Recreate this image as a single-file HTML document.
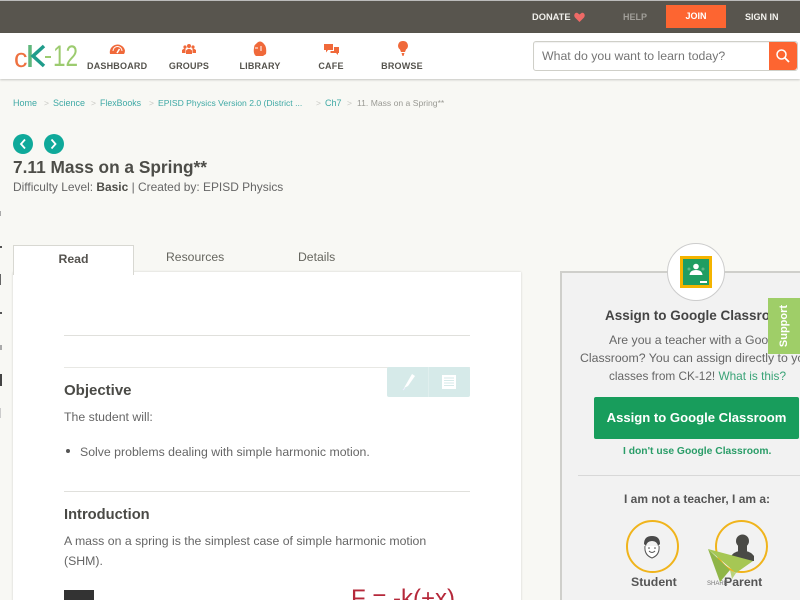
<!DOCTYPE html>
<html style="overflow:hidden;height:600px"><head><meta charset="utf-8"><style>
html,body{margin:0;padding:0}
body{width:800px;height:600px;overflow:hidden;position:relative;font-family:"Liberation Sans",sans-serif;color:#5a5a5a}
#w{position:absolute;left:0;top:0;width:800px;height:600px;overflow:hidden;background:#f8f8f4}
.a{position:absolute;white-space:nowrap}
.nav{font-size:9px;font-weight:bold;color:#55534d;text-align:center;top:61px;letter-spacing:.2px}
.bc{font-size:9px;top:98px;color:#3fa9a5}
.sep{font-size:8.500px;top:98px;color:#c9c9c4}
.ctr{text-align:center}
svg{position:absolute;overflow:visible}
</style></head><body><div id="w">
<div class="a" style="left:0;top:0;width:800px;height:33px;background:#58554e;border-top:1px solid #bbb;box-sizing:border-box"></div>
<div class="a" style="left:0;top:33px;width:800px;height:46px;background:#fff;box-shadow:0 1px 2px rgba(0,0,0,.2)"></div>
<div class="a" style="left:532px;top:12px;font-size:9.300px;font-weight:bold;color:#f0efeb">DONATE</div>
<svg style="left:574px;top:12px" width="11" height="10" viewBox="0 0 11 10"><path d="M5.500 10L1 5.500C-1 3 1.500 0 3.500 1L5.500 2.500L7.500 1C9.500 0 12 3 10 5.500Z" fill="#ee6a66"/></svg>
<div class="a" style="left:623px;top:12px;font-size:9px;font-weight:bold;color:#a09e98">HELP</div>
<div class="a ctr" style="left:666px;top:5px;width:60px;height:23px;background:#fd6531;color:#fff;font-size:9px;font-weight:bold;line-height:23px">JOIN</div>
<div class="a" style="left:745px;top:12px;font-size:9px;font-weight:bold;color:#f4f3ef">SIGN IN</div>

<div class="a" style="left:14px;top:42px;font-size:27px;line-height:32px;color:#ee7140">c</div>
<svg style="left:28px;top:45px" width="18" height="23" viewBox="0 0 18 23"><path d="M2 0V22" stroke="#5fb77c" stroke-width="3.500"/><path d="M16 1L5 11L16 21" stroke="#1f9c8b" stroke-width="3.500" fill="none"/></svg>
<div class="a" style="left:45px;top:56px;width:6px;height:2px;background:#9ccb6f"></div>
<div class="a" style="left:53px;top:41px;font-size:30px;line-height:32px;color:#9ccb6f;transform:scaleX(.75);transform-origin:0 0">12</div>

<svg style="left:110px;top:43px" width="15" height="11" viewBox="0 0 15 11"><path d="M0 11A7.500 7.500 0 0 1 15 7.500Q15 9.500 14 11Z" fill="#f0693a"/><path d="M3 8A4.500 4.500 0 0 1 12 8" stroke="#fff" fill="none"/><path d="M7 10L9.500 6" stroke="#fff" stroke-width="1.500"/></svg>
<svg style="left:182px;top:44px" width="14" height="10" viewBox="0 0 14 10"><circle cx="7" cy="2" r="2" fill="#f0693a"/><circle cx="3" cy="3" r="1.600" fill="#f0693a"/><circle cx="11" cy="3" r="1.600" fill="#f0693a"/><path d="M4 10V6.500Q7 3 10 6.500V10Z" fill="#f0693a"/><path d="M0 9V6Q3 3.500 3.500 5V9ZM14 9V6Q11 3.500 10.500 5V9Z" fill="#f0693a"/></svg>
<svg style="left:253px;top:41px" width="14" height="15" viewBox="0 0 14 15"><path d="M3 3Q7-2 11 3Q14 6 13 13L10 15H3Q0 13 1 7Q1 4 3 3Z" fill="#f0693a"/><path d="M5 7H2M8 5V10" stroke="#fff"/></svg>
<svg style="left:324px;top:44px" width="15" height="12" viewBox="0 0 15 12"><path d="M0 0H9V6H4L2 8.500V6H0Z" fill="#f0693a"/><path d="M10 3H15V9H14V11L12 9H6.500V7H10Z" fill="#f0693a"/></svg>
<svg style="left:398px;top:41px" width="10" height="15" viewBox="0 0 10 15"><path d="M5 0A4.700 4.700 0 0 1 8 8.500L7 11H3L2 8.500A4.700 4.700 0 0 1 5 0Z" fill="#f0693a"/><path d="M3.500 12H6.500L5.500 15H4.500Z" fill="#f0693a"/></svg>
<div class="a nav" style="left:87px;width:60px">DASHBOARD</div>
<div class="a nav" style="left:159px;width:60px">GROUPS</div>
<div class="a nav" style="left:230px;width:60px">LIBRARY</div>
<div class="a nav" style="left:301px;width:60px">CAFE</div>
<div class="a nav" style="left:372px;width:60px">BROWSE</div>

<div class="a" style="left:533px;top:41px;width:265px;height:30px;background:#fff;border:1px solid #cfcfc8;border-radius:3px;box-sizing:border-box;box-shadow:inset 0 1px 1px rgba(0,0,0,.06)"></div>
<div class="a" style="left:542px;top:49px;font-size:12.300px;color:#757575">What do you want to learn today?</div>
<div class="a" style="left:769px;top:42px;width:28px;height:28px;background:#fd6531;border-radius:0 3px 3px 0"></div>
<svg style="left:776px;top:49px" width="14" height="14" viewBox="0 0 14 14"><circle cx="5.500" cy="5.500" r="4.500" fill="none" stroke="#fff" stroke-width="1.500"/><path d="M9 9L13 13" stroke="#fff" stroke-width="1.800"/></svg>

<div class="a bc" style="left:13px">Home</div><div class="a sep" style="left:44px">&gt;</div>
<div class="a bc" style="left:53px">Science</div><div class="a sep" style="left:91px">&gt;</div>
<div class="a bc" style="left:100px;font-size:8.800px">FlexBooks</div><div class="a sep" style="left:149px">&gt;</div>
<div class="a bc" style="left:158px;font-size:8.600px">EPISD Physics Version 2.0 (District ...</div><div class="a sep" style="left:316px">&gt;</div>
<div class="a bc" style="left:325px">Ch7</div><div class="a sep" style="left:347px">&gt;</div>
<div class="a bc" style="left:357px;color:#9a9a94;font-size:8.600px">11. Mass on a Spring**</div>

<div class="a" style="left:13px;top:134px;width:20px;height:20px;border-radius:50%;background:#0fa99a"></div>
<div class="a" style="left:44px;top:134px;width:20px;height:20px;border-radius:50%;background:#0fa99a"></div>
<svg style="left:13px;top:134px" width="51" height="20" viewBox="0 0 51 20"><path d="M12 5.500L8 10L12 14.500M38.500 5.500L42.500 10L38.500 14.500" stroke="#fff" stroke-width="1.800" fill="none"/></svg>
<div class="a" style="left:13px;top:157px;font-size:17.300px;font-weight:bold;color:#4d4d48">7.11 Mass on a Spring**</div>
<div class="a" style="left:13px;top:180px;font-size:11.950px;color:#666">Difficulty Level: <b style="color:#4d4d48">Basic</b> | Created by: EPISD Physics</div>

<div class="a" style="left:13px;top:272px;width:508px;height:340px;background:#fff;box-shadow:0 0 2px rgba(0,0,0,.18)"></div>
<div class="a ctr" style="left:13px;top:245px;width:119px;height:29px;background:#fff;border:1px solid #d8d8d2;border-bottom:none;line-height:27px;font-size:12.300px;font-weight:bold;color:#55534f">Read</div>
<div class="a" style="left:166px;top:250px;font-size:12.200px;color:#66665f">Resources</div>
<div class="a" style="left:298px;top:250px;font-size:12.200px;color:#66665f">Details</div>

<div class="a" style="left:64px;top:335px;width:406px;height:1px;background:#e0e0dc"></div>
<div class="a" style="left:64px;top:367px;width:406px;height:1px;background:#e8e8e4"></div>
<div class="a" style="left:387px;top:367px;width:83px;height:30px;background:#d6eae9;border-radius:2px"></div>
<div class="a" style="left:428px;top:367px;width:1px;height:30px;background:#e0efee"></div>
<svg style="left:402px;top:373px" width="14" height="18" viewBox="0 0 14 18"><path d="M10 1L13 3L6 13L2 15Z" fill="#fff"/><path d="M1 17L3 15" stroke="#eef"/></svg>
<svg style="left:442px;top:375px" width="14" height="14" viewBox="0 0 14 14"><rect width="14" height="14" fill="#fff"/><path d="M2 3H12M2 5.500H12M2 8H12M2 10.500H12" stroke="#d6eae9"/></svg>
<div class="a" style="left:64px;top:382px;font-size:15px;font-weight:bold;color:#4a4a46">Objective</div>
<div class="a" style="left:64px;top:410px;font-size:12.300px;color:#666">The student will:</div>
<div class="a" style="left:66px;top:449px;width:4px;height:4px;border-radius:50%;background:#555"></div>
<div class="a" style="left:80px;top:445px;font-size:12.300px;color:#666">Solve problems dealing with simple harmonic motion.</div>
<div class="a" style="left:64px;top:491px;width:406px;height:1px;background:#e0e0dc"></div>
<div class="a" style="left:64px;top:507px;font-size:14.700px;font-weight:bold;color:#4a4a46">Introduction</div>
<div class="a" style="left:64px;top:534px;font-size:12.300px;color:#666">A mass on a spring is the simplest case of simple harmonic motion</div>
<div class="a" style="left:64px;top:554px;font-size:12.300px;color:#666">(SHM).</div>
<div class="a" style="left:64px;top:590px;width:30px;height:10px;background:#333"></div>
<div class="a" style="left:351px;top:585px;font-size:24px;color:#b5283a">F = -k(+x)</div>

<div class="a" style="left:560px;top:271px;width:260px;height:340px;background:#f2f2f2;border:2px solid #cfcfcb;box-sizing:border-box"></div>
<div class="a" style="left:667px;top:243px;width:58px;height:58px;border-radius:50%;background:#fff;border:1.500px solid #ccc;box-sizing:border-box"></div>
<div class="a" style="left:680px;top:256px;width:32px;height:32px;background:#1f9d62;border:3px solid #f4b400;box-sizing:border-box"></div>
<svg style="left:683px;top:259px" width="26" height="26" viewBox="0 0 26 26"><circle cx="13" cy="7.500" r="2.800" fill="#fff"/><path d="M6.500 16Q7 11 13 11Q19 11 19.500 16Z" fill="#fff"/><rect x="17" y="22" width="7" height="2" fill="#fff"/><circle cx="6" cy="10" r="1.500" fill="#5fb88a"/><circle cx="20" cy="10" r="1.500" fill="#5fb88a"/></svg>
<div class="a" style="left:605px;top:308px;font-size:13.500px;font-weight:bold;color:#444">Assign to Google Classroom</div>
<div class="a" style="left:609px;top:333px;font-size:12.300px;color:#666">Are you a teacher with a Google</div>
<div class="a" style="left:580px;top:351px;font-size:12.300px;color:#666">Classroom? You can assign directly to your</div>
<div class="a" style="left:609px;top:369px;font-size:11.800px;color:#666">classes from CK-12! <span style="color:#3aa377">What is this?</span></div>
<div class="a ctr" style="left:594px;top:397px;width:205px;height:42px;background:#189d5c;border-radius:2px;color:#fff;font-size:13.100px;font-weight:bold;line-height:41px">Assign to Google Classroom</div>
<div class="a" style="left:623px;top:446px;font-size:10.300px;font-weight:bold;color:#2a9d68">I don't use Google Classroom.</div>
<div class="a" style="left:578px;top:475px;width:222px;height:1px;background:#d8d8d8"></div>
<div class="a" style="left:624px;top:492px;font-size:12px;font-weight:bold;color:#555">I am not a teacher, I am a:</div>
<div class="a" style="left:626px;top:520px;width:53px;height:53px;border-radius:50%;border:2.500px solid #f0b41c;box-sizing:border-box"></div>
<div class="a" style="left:715px;top:520px;width:53px;height:53px;border-radius:50%;border:2.500px solid #f0b41c;box-sizing:border-box"></div>
<svg style="left:640px;top:535px" width="24" height="24" viewBox="0 0 24 24"><path d="M5 11Q4 20 12 23Q20 20 19 11" fill="#fff" stroke="#555"/><path d="M4 9Q4 1 12 1Q20 1 20 9L18 11Q17 6 12 6Q7 6 6 11Z" fill="#4a4a4a"/><path d="M9 16Q12 19 15 16" stroke="#555" fill="none"/><circle cx="9" cy="13" r=".8" fill="#444"/><circle cx="15" cy="13" r=".8" fill="#444"/></svg>
<svg style="left:731px;top:533px" width="23" height="28" viewBox="0 0 23 28"><circle cx="11.500" cy="8" r="6.500" fill="#4a4a46"/><rect x="7" y="10" width="9" height="9" fill="#4a4a46"/><path d="M0 28V23Q3 19 8 18H15Q20 19 23 23V28Z" fill="#4a4a46"/></svg>
<div class="a" style="left:631px;top:575px;font-size:12.300px;font-weight:bold;color:#555">Student</div>
<div class="a" style="left:724px;top:575px;font-size:12.300px;font-weight:bold;color:#555">Parent</div>
<div class="a" style="left:707px;top:581px;font-size:6px;color:#777">SHARE</div>
<svg style="left:708px;top:549px" width="46" height="36" viewBox="0 0 46 36"><path d="M0 0L45 12L28 24Z" fill="#a6c754"/><path d="M0 0L12 33L22 21Z" fill="#8fb548"/><path d="M22 21L28 24L24 30Z" fill="#b9d37a"/></svg>

<div class="a" style="left:768px;top:298px;width:32px;height:56px;background:#9fce68"></div>
<div class="a ctr" style="left:756px;top:319px;width:56px;height:14px;line-height:14px;font-size:11px;font-weight:bold;color:#fff;transform:rotate(-90deg)">Support</div>

<div class="a" style="left:0;top:211px;width:1px;height:5px;background:#aaa"></div>
<div class="a" style="left:0;top:246px;width:2px;height:2px;background:#555"></div>
<div class="a" style="left:0;top:274px;width:1px;height:11px;background:#666"></div>
<div class="a" style="left:0;top:312px;width:2px;height:2px;background:#555"></div>
<div class="a" style="left:0;top:345px;width:2px;height:5px;background:#aaa"></div>
<div class="a" style="left:0;top:374px;width:2px;height:12px;background:#444"></div>
<div class="a" style="left:0;top:408px;width:1px;height:10px;background:#ccc"></div>
</div></body></html>
